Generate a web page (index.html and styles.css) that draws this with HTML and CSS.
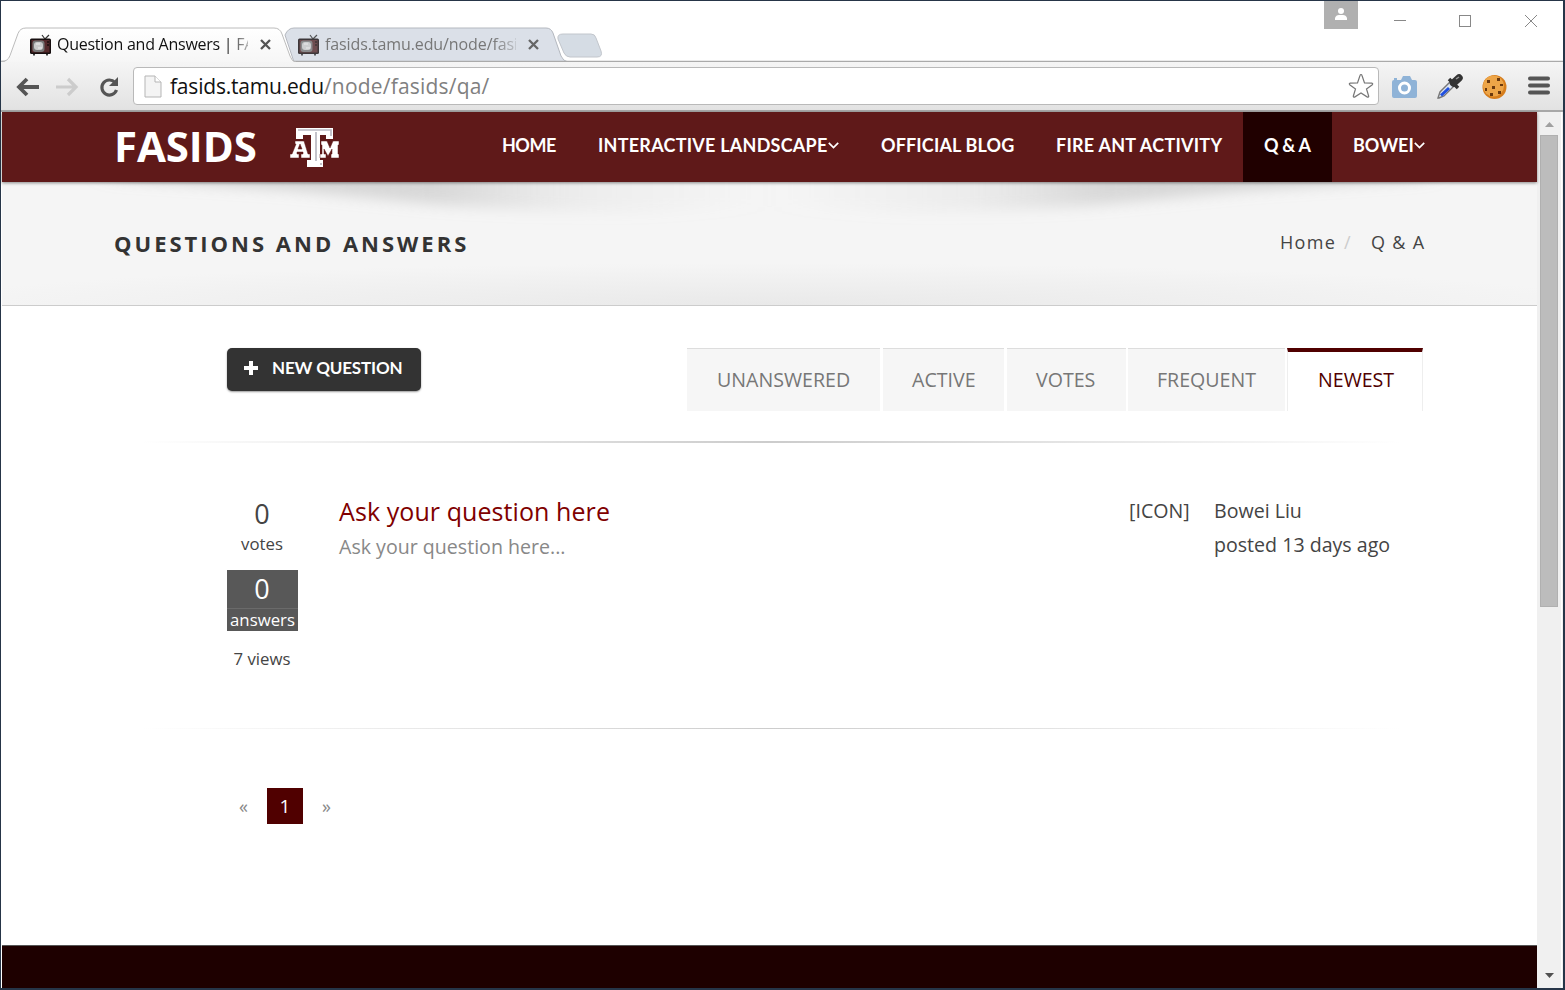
FILE: index.html
```html
<!DOCTYPE html>
<html lang="en">
<head>
<meta charset="utf-8">
<title>Question and Answers | FASIDS</title>
<link rel="stylesheet" href="styles.css">
</head>
<body>
<svg width="0" height="0" class="defs">
  <symbol id="tv" viewBox="0 0 21 22">
    <path d="M12 1l3 4M19 1l-4 4" stroke="#333" stroke-width="1.2" fill="none"/>
    <path d="M4 19v2.500M17 19v2.500" stroke="#111" stroke-width="1.600"/>
    <rect x="0" y="4.500" width="21" height="15.500" rx="1.500" fill="#160e0f"/>
    <rect x="1.500" y="6" width="18" height="12.500" fill="#54292b"/>
    <rect x="2.500" y="6.500" width="12" height="11.500" rx="3" fill="#777"/>
    <rect x="4" y="8" width="9" height="8" rx="3" fill="#c9c9c9"/>
    <path d="M6 10h4M8 14h4" stroke="#eee"/>
    <path d="M17 8h2M17 11h2" stroke="#170c0c" stroke-width="1.400"/>
  </symbol>
</svg>
<div class="window">
  <header class="tabstrip">
    <svg class="tab-shapes" width="1562" height="61" viewBox="0 0 1562 61">
      <defs>
        <linearGradient id="tabfill" x1="0" y1="27" x2="0" y2="61" gradientUnits="userSpaceOnUse"><stop offset="0" stop-color="#fff"/><stop offset="1" stop-color="#f6f6f6"/></linearGradient>
      </defs>
      <path d="M284 34q3-7 9-7h252q5 0 7 5l8 23q2 5 7 6H293z" fill="#dbe0e8" stroke="#b4b8bf"/>
      <path d="M562 33h28q4 0 5 4l5 13q2 6-4 6h-27q-4 0-6-4l-6-14q-1-5 5-5z" fill="#d5dce4" stroke="#c2c6cc"/>
      <path d="M0 60.500h1562" stroke="#aaa" stroke-width="1.400"/>
      <path d="M0 61q7 0 9-6l8-22q2-6 8-6h248q6 0 8 6l8 22q2 6 6 6z" fill="url(#tabfill)"/>
      <path d="M0 60.500q7 0 9-6l8-22q2-5.500 8-5.500h248q6 0 8 6l8 22q2 6 6 6" fill="none" stroke="#bcbcbc"/>
    </svg>
    <div class="tabs">
      <div class="tab">
        <svg class="favicon" width="21" height="22"><use href="#tv"/></svg>
        <span class="tab-title">Question and Answers | FA</span>
        <svg class="tab-close" width="11" height="11" viewBox="0 0 11 11"><path d="M1 1l9 9M10 1l-9 9" stroke="#555" stroke-width="2.300"/></svg>
      </div>
      <div class="tab tab-back">
        <svg class="favicon" width="21" height="22"><use href="#tv"/></svg>
        <span class="tab-title">fasids.tamu.edu/node/fasi</span>
        <svg class="tab-close" width="11" height="11" viewBox="0 0 11 11"><path d="M1 1l9 9M10 1l-9 9" stroke="#666" stroke-width="2.300"/></svg>
      </div>
    </div>
    <div class="controls">
      <div class="profile"><svg width="12" height="12" viewBox="0 0 12 12"><circle cx="6" cy="3" r="3" fill="#fff"/><path d="M0 12V10q1-3 4-3h4q3 0 4 3v2z" fill="#fff"/></svg></div>
      <svg class="winbtns" width="146" height="15" viewBox="0 0 146 15" fill="none" stroke="#888"><path d="M1 7.500h12"/><rect x="66.500" y="2.500" width="11" height="11"/><path d="M132 2l12 12M144 2l-12 12"/></svg>
    </div>
  </header>
  <div class="toolbar">
    <svg class="nav-icons" width="120" height="24" viewBox="0 0 120 24" fill="none">
      <path d="M12 4L4 12l8 8M5 12h19" transform="translate(-1 0)" stroke="#555" stroke-width="3.800"/>
      <path d="M52 4l8 8-8 8M59 12H40" stroke="#ccc" stroke-width="3.200"/>
      <path d="M99 7.500A7.500 7.500 0 1 0 100.500 15" stroke="#555" stroke-width="3.200"/><path d="M102 2v9h-9z" fill="#555"/>
    </svg>
    <div class="omnibox">
      <svg width="18" height="23" viewBox="0 0 18 23"><path d="M1 1h10l6 6v15H1z" fill="#f4f4f4" stroke="#b5b5b5"/><path d="M11 1v6h6" fill="#fff" stroke="#b5b5b5"/></svg>
      <span class="url">fasids.tamu.edu<span class="path">/node/fasids/qa/</span></span>
      <svg class="star" width="26" height="26" viewBox="0 0 26 26"><path d="M13 1.500q.7 0 1 1l2.500 7.500 7.300.2q1.500.4.500 1.500L18.500 16l2.200 7.200q0 1.300-1.300.9L13 20l-6.400 4.100q-1.300.4-1.300-.9L7.500 16l-5.800-4.300q-1-1.100.5-1.500l7.300-.2L12 2.500q.3-1 1-1z" fill="#fff" stroke="#777" stroke-width="1.200"/></svg>
    </div>
    <svg class="extensions" width="160" height="28" viewBox="0 0 160 28">
      <path d="M3 4h3v2h4l2-4h7l2 4h3q2 0 2 2v14q0 2-2 2H3q-2 0-2-2V8q0-2 2-2z" fill="#8fb3d7"/><circle cx="13.500" cy="14" r="5" fill="#8fb3d7" stroke="#fff" stroke-width="3"/>
      <path d="M47 24l2-6L60 7l4 4-11 11-5 2z" fill="#dce5f3" stroke="#777" stroke-width="1.400"/><path d="M50 21.500l8-7.500" stroke="#1f4fe0" stroke-width="3"/><path d="M58 5l9 9" stroke="#333" stroke-width="3.500"/><path d="M62.500 9l5.500-5" stroke="#333" stroke-width="7.500" stroke-linecap="round"/><path d="M65 5l3-2" stroke="#999" stroke-width="1.500"/>
      <circle cx="103.500" cy="13" r="12" fill="#d67d1c"/><circle cx="102.500" cy="12" r="10.500" fill="#eda548"/><g fill="#69380e" transform="translate(-1 0)"><rect x="97" y="6" width="3" height="3"/><rect x="107" y="4" width="3" height="3"/><rect x="102" y="12" width="3" height="3"/><rect x="95" y="14" width="2" height="3"/><rect x="108" y="17" width="3" height="3"/><rect x="100" y="19" width="3" height="3"/><rect x="110" y="10" width="3" height="2"/></g>
      <path d="M139 4.500h18M139 11.500h18M139 18.500h18" stroke="#555" stroke-width="4" stroke-linecap="round"/>
    </svg>
  </div>
  <div class="viewport">
    <div class="page">
      <nav class="site-nav">
        <div class="brand">FASIDS</div>
        <svg class="atm" width="50" height="42" viewBox="0 0 50 42">
          <path d="M6 1h37v11h-7V8H30v25h3v7H17v-7h4V8H13v4H6z" fill="#fff"/>
          <path d="M8 3h33v6M26 5v29M31 36v2" fill="none" stroke="#b9b9c2" stroke-width="1.700"/>
          <path fill="#fff" stroke="#5f1919" stroke-width=".5" fill-rule="evenodd" d="M5 14h9l4 13h2v4h-9v-4h2v-2H7v2h2v4H0v-4h2l4-10H5zm5 3l-2 5h4zM31 14h6l3 7 3-7h6v4h-1v9h1v4h-8v-4h1v-5l-4 7-4-7v5h2v4h-6v-4h2v-9h-1z"/>
        </svg>
        <div class="menu">
          <a class="m1"><span>HOME</span></a>
          <a class="m2"><span>INTERACTIVE LANDSCAPE</span><svg width="11" height="7" viewBox="0 0 11 7"><path d="M.8.8l4.700 4.700L10.200.8" fill="none" stroke="#fff" stroke-width="1.700"/></svg></a>
          <a class="m3"><span>OFFICIAL BLOG</span></a>
          <a class="m4"><span>FIRE ANT ACTIVITY</span></a>
          <a class="m5 current"><span>Q &amp; A</span></a>
          <a class="m6"><span>BOWEI</span><svg width="11" height="7" viewBox="0 0 11 7"><path d="M.8.8l4.700 4.700L10.200.8" fill="none" stroke="#fff" stroke-width="1.700"/></svg></a>
        </div>
      </nav>
      <section class="banner">
        <svg class="banner-shade" width="1535" height="123" viewBox="0 0 1535 123">
          <defs>
            <filter id="soft" x="-20%" y="-100%" width="140%" height="300%"><feGaussianBlur stdDeviation="14 7"/></filter>
            <linearGradient id="sh"><stop offset="0" stop-color="#aaa" stop-opacity=".5"/><stop offset=".5" stop-color="#aaa" stop-opacity=".38"/><stop offset=".7" stop-color="#bbb" stop-opacity=".15"/><stop offset="1" stop-color="#ccc" stop-opacity="0"/></linearGradient>
          </defs>
          <g filter="url(#soft)"><path d="M110-14V-4L290 8 400 19Q490 29 640 30L767 24V-14z" fill="url(#sh)"/></g>
          <g filter="url(#soft)" transform="translate(1535 0) scale(-1 1)"><path d="M110-14V-4L290 8 400 19Q490 29 640 30L767 24V-14z" fill="url(#sh)"/></g>
        </svg>
        <h1>QUESTIONS AND ANSWERS</h1>
        <div class="crumbs"><span class="c1">Home</span><span class="slash">/</span><span class="c2">Q &amp; A</span></div>
      </section>
      <main class="content">
        <div class="actions">
          <div class="new-question"><svg width="14" height="14" viewBox="0 0 14 14"><path d="M7 1.500v11M1.500 7h11" stroke="#fff" stroke-width="4" stroke-linecap="square" stroke-dasharray="11"/></svg><span>NEW QUESTION</span></div>
          <div class="filters">
            <div class="f1"><span>UNANSWERED</span></div><div class="f2"><span>ACTIVE</span></div><div class="f3"><span>VOTES</span></div><div class="f4"><span>FREQUENT</span></div><div class="f5 selected"><span>NEWEST</span></div>
          </div>
        </div>
        <div class="rule"></div>
        <article class="question">
          <div class="stats">
            <div class="num">0</div><div class="label votes"><span>votes</span></div>
            <div class="answers"><div class="num">0</div><div class="label"><span>answers</span></div></div>
            <div class="label views"><span>7 views</span></div>
          </div>
          <div class="summary"><h2><span>Ask your question here</span></h2><p><span>Ask your question here...</span></p></div>
          <div class="avatar"><span>[ICON]</span></div>
          <div class="author"><div><span>Bowei Liu</span></div><div><span class="posted">posted 13 days ago</span></div></div>
        </article>
        <div class="rule thin"></div>
        <div class="pager"><span>«</span><b>1</b><span>»</span></div>
      </main>
      <footer class="site-footer"></footer>
    </div>
    <div class="scrollbar"><svg width="9" height="5" viewBox="0 0 9 5"><path d="M0 5l4.500-5L9 5z" fill="#a0a0a0"/></svg><div class="thumb"></div><svg class="down" width="9" height="5" viewBox="0 0 9 5"><path d="M0 0l4.500 5L9 0z" fill="#505050"/></svg></div>
  </div>
</div>
</body>
</html>
```
FILE: styles.css
```css
* { box-sizing: border-box; }
body { margin: 0; width: 1565px; height: 990px; overflow: hidden; background: #263548; font-family: "Open Sans", sans-serif; color: #444; }
.defs { display: block; height: 0; }
.window { margin: 1px 2px 0 1px; height: 987px; background: #fff; display: flex; flex-direction: column; }
.tabstrip { position: relative; height: 61px; flex: none; display: flex; justify-content: space-between; }
.tab-shapes { position: absolute; left: 0; top: 0; }
.tabs { position: relative; display: flex; padding: 32px 0 0 29px; }
.tab { width: 268px; height: 24px; display: flex; align-items: center; }
.favicon { flex: none; margin-right: 6px; }
.tab-back .favicon { opacity: .8; }
.tab-title { width: 191px; padding-bottom: 2px; white-space: nowrap; font-size: 16px; color: #111; letter-spacing: -0.25px; -webkit-mask-image: linear-gradient(90deg, #000 88%, rgba(0,0,0,.3)); mask-image: linear-gradient(90deg, #000 88%, rgba(0,0,0,.3)); }
.tab-back .tab-title { color: #777; letter-spacing: -.1px; }
.tab-close { margin-left: 12px; margin-top: -1px; }
.controls { position: relative; display: flex; width: 239px; gap: 35px; }
.profile { width: 34px; height: 28px; background: #b0b0b0; display: flex; justify-content: center; padding-top: 7px; flex: none; }
.winbtns { margin-top: 12px; flex: none; }
.toolbar { height: 50px; flex: none; display: flex; padding-top: 5px; background: linear-gradient(#f5f5f5, #e2e2e2); border-bottom: 2px solid #a8a8a8; }
.nav-icons { margin: 8px -3px 0 15px; flex: none; }
.omnibox { width: 1246px; height: 38px; flex: none; background: #fff; border: 1px solid #b9b9b9; border-radius: 4px; display: flex; align-items: center; padding-left: 10px; }
.url { margin-left: 8px; font-size: 21px; line-height: 34px; color: #111; white-space: nowrap; letter-spacing: -.2px; }
.path { color: #808080; letter-spacing: .2px; }
.star { margin: 0 4px 0 auto; }
.extensions { margin: 7px 0 0 12px; flex: none; }
.viewport { flex: 1; display: flex; margin-left: 1px; background: #f0f0f0; }
.page { width: 1535px; background: #fff; display: flex; flex-direction: column; flex: none; }
.site-nav { position: relative; height: 70px; flex: none; background: #5f1919; display: flex; box-shadow: 0 1px 3px rgba(0,0,0,.45); z-index: 1; padding-left: 112px; }
.brand { color: #fff; font-weight: 700; font-size: 42px; line-height: 68px; width: 176px; white-space: nowrap; letter-spacing: -.1px; }
.atm { margin-top: 15px; }
.menu { display: flex; margin-left: 141px; font-family: Lato, sans-serif; font-weight: 700; font-size: 18px; line-height: 66px; color: #fff; }
.menu a { display: flex; align-items: center; padding: 0 0 4px 21px; white-space: nowrap; }
.m1 { width: 96px; letter-spacing: -.5px; } .m2 { width: 283px; letter-spacing: .24px; } .m3 { width: 175px; letter-spacing: .15px; } .m4 { width: 208px; letter-spacing: .25px; } .m5 { width: 89px; letter-spacing: -.3px; } .m6 { width: 110px; }
.current { background: #200000; }
.banner { position: relative; height: 124px; flex: none; background: radial-gradient(ellipse 850px 42px at 50% 100%, #e9e9e9, rgba(245,245,245,0)), #f5f5f5; border-bottom: 1px solid #ccc; display: flex; justify-content: space-between; padding: 0 111px 0 112px; overflow: hidden; }
.banner-shade { position: absolute; left: 0; top: 0; }
h1 { position: relative; margin: 0; font-size: 22px; line-height: 122px; font-weight: 700; color: #333; letter-spacing: 3px; white-space: nowrap; }
.crumbs { position: relative; display: flex; width: 146px; font-size: 18px; line-height: 120px; letter-spacing: 1.3px; white-space: nowrap; }
.c1 { width: 64px; } .slash { width: 27px; color: #ccc; }
.content { padding: 42px 0 0 225px; height: 639px; flex: none; }
.actions { display: flex; height: 63px; }
.new-question { width: 194px; height: 43px; background: #333; border-radius: 5px; box-shadow: 0 1px 2px rgba(0,0,0,.4); display: flex; align-items: center; padding: 0 0 3px 17px; gap: 14px; font: 700 17px/20px Lato, sans-serif; letter-spacing: -.15px; color: #fff; white-space: nowrap; }
.filters { display: flex; gap: 2px; margin-left: 266px; font-size: 19.6px; line-height: 62px; color: #777; }
.filters div { border-top: 1px solid #ddd; background: #f6f6f6; padding-left: 30px; white-space: nowrap; height: 63px; }
.filters .f1 { width: 193px; margin-right: 1px; } .filters .f2 { width: 121px; margin-right: 1px; padding-left: 29px; } .filters .f3 { width: 119px; padding-left: 29px; } .filters .f4 { width: 157px; padding-left: 29px; } .filters .f5 { width: 136px; }
.filters .selected { border: 1px solid #eee; border-top: 4px solid #500000; border-bottom: 0; background: #fff; color: #500000; line-height: 56px; }
.rule { height: 2px; width: 1260px; margin: 30px 0 0 -87px; background: linear-gradient(90deg, transparent, #ccc 50%, transparent); }
.question { display: flex; padding-top: 52px; height: 285px; }
.stats { width: 71px; text-align: center; }
.num { font-size: 27px; line-height: 38px; }
.stats > .num, .stats > .label { margin-left: -1px; }
.label { font-size: 16.8px; line-height: 22px; white-space: nowrap; }
.answers { margin-top: 15px; background: #585858; color: #fff; height: 61px; }
.answers .num { padding-right: 1px; }
.answers .label { border-top: 1px solid #6a6a6a; }
.views { margin-top: 17px; }
.summary { margin-left: 41px; width: 790px; white-space: nowrap; }
h2 { margin: 0; font-size: 25px; line-height: 33px; font-weight: 400; letter-spacing: .08px; color: #800000; }
p { margin: 0; font-size: 19.6px; line-height: 37px; color: #888; }
.avatar, .author { font-size: 19.6px; line-height: 34px; white-space: nowrap; margin-top: -1px; }
.avatar { width: 85px; }
.thin { height: 1px; margin-top: 0; }
.pager { display: flex; margin-top: 59px; height: 36px; width: 116px; justify-content: space-between; font-size: 18px; line-height: 37px; color: #888; padding: 0 12px; }
.pager b { width: 36px; background: #500000; color: #fff; text-align: center; font-weight: 400; font-size: 19px; }
.site-footer { background: #1e0000; flex: 1; border-top: 1px solid #555; }
.scrollbar { width: 25px; display: flex; flex-direction: column; align-items: center; padding-top: 10px; border-right: 1px solid #fff; }
.thumb { width: 18px; height: 472px; margin-top: 8px; background: #bcbcbc; border: 1px solid #b0b0b0; }
.down { margin: auto 0 10px; }
```
